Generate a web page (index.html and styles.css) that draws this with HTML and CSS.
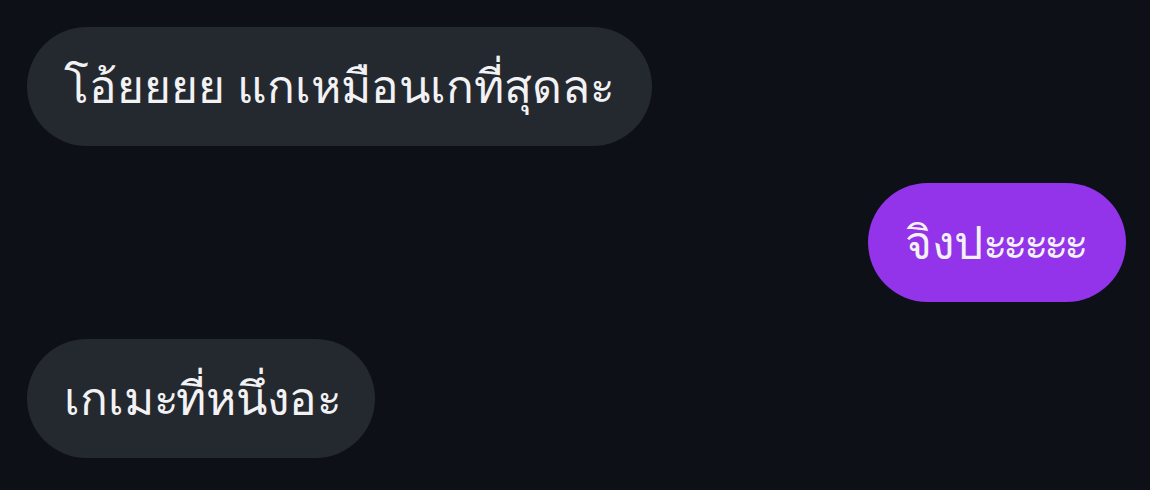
FILE: index.html
```html
<!DOCTYPE html>
<html lang="th">
<head>
<meta charset="utf-8">
<link rel="stylesheet" href="styles.css">
</head>
<body>
<div class="chat">
  <div class="msg in"><span class="bubble gray">โอ้ยยยย แกเหมือนเกที่สุดละ</span></div>
  <div class="msg out"><span class="bubble purple">จิงป<span class="sa">ะะะะะ</span></span></div>
  <div class="msg in"><span class="bubble gray">เกเม<span class="sa">ะ</span>ที่หนึ่งอ<span class="sa">ะ</span></span></div>
</div>
</body>
</html>
```

FILE: styles.css
```css
html, body {
  margin: 0;
  padding: 0;
  background: #0d1117;
  height: 100%;
}
.chat {
  display: flex;
  flex-direction: column;
  gap: 37px;
  padding: 27px 24px 0 27px;
  font-family: "Noto Sans", "DejaVu Sans", sans-serif;
}
.msg {
  display: flex;
}
.msg.in { justify-content: flex-start; }
.msg.out { justify-content: flex-end; }
.bubble {
  display: flex;
  align-items: center;
  height: 119px;
  box-sizing: border-box;
  padding: 0 37px;
  border-radius: 60px;
  font-size: 46px;
  color: #f2f2f4;
  white-space: nowrap;
}
.sa {
  letter-spacing: -3.5px;
}
.purple .sa {
  letter-spacing: -4.75px;
  margin-right: 4.75px;
}
.gray { background: #24292f; }
.purple { background: #9333ea; }
```
